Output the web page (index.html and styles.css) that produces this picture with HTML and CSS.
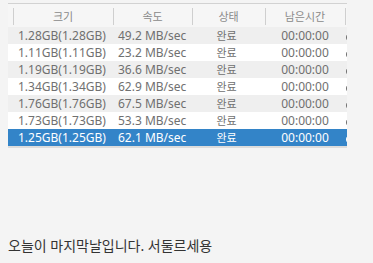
FILE: index.html
```html
<!DOCTYPE html>
<html lang="ko">
<head>
<meta charset="utf-8">
<link rel="stylesheet" href="styles.css">
</head>
<body>
<div class="list">
  <table class="grid">
    <colgroup>
      <col class="c0"><col class="c1"><col class="c2"><col class="c3"><col class="c4"><col class="c5">
    </colgroup>
    <thead>
      <tr><th></th><th>크기</th><th>속도</th><th>상태</th><th>남은시간</th><th></th></tr>
    </thead>
    <tbody>
      <tr class="odd"><td></td><td>1.28GB(1.28GB)</td><td>49.2 MB/sec</td><td class="st">완료</td><td class="tm">00:00:00</td><td class="ex"></td></tr>
      <tr><td></td><td>1.11GB(1.11GB)</td><td>23.2 MB/sec</td><td class="st">완료</td><td class="tm">00:00:00</td><td class="ex"></td></tr>
      <tr class="odd"><td></td><td>1.19GB(1.19GB)</td><td>36.6 MB/sec</td><td class="st">완료</td><td class="tm">00:00:00</td><td class="ex"></td></tr>
      <tr><td></td><td>1.34GB(1.34GB)</td><td>62.9 MB/sec</td><td class="st">완료</td><td class="tm">00:00:00</td><td class="ex"></td></tr>
      <tr class="odd"><td></td><td>1.76GB(1.76GB)</td><td>67.5 MB/sec</td><td class="st">완료</td><td class="tm">00:00:00</td><td class="ex"></td></tr>
      <tr><td></td><td>1.73GB(1.73GB)</td><td>53.3 MB/sec</td><td class="st">완료</td><td class="tm">00:00:00</td><td class="ex"></td></tr>
      <tr class="sel"><td></td><td>1.25GB(1.25GB)</td><td>62.1 MB/sec</td><td class="st">완료</td><td class="tm">00:00:00</td><td class="ex"></td></tr>
    </tbody>
  </table>
</div>
<p class="note">오늘이 마지막날입니다. 서둘르세용</p>
</body>
</html>
```
FILE: styles.css
```css
html, body {
  margin: 0;
  background: #f4f4f4;
}
body {
  padding: 3px 0 0 8px;
  font-family: "Noto Sans", "Noto Sans CJK KR", sans-serif;
}
.list {
  width: 339px;
  overflow: hidden;
  border-bottom: 2px solid #dcdcdc;
  background: #ffffff;
}
.grid {
  border-collapse: collapse;
  table-layout: fixed;
  width: 420px;
  font-size: 12px;
  color: #707070;
}
.c0 { width: 5px; }
.c1 { width: 100px; }
.c2 { width: 79px; }
.c3 { width: 73px; }
.c4 { width: 80px; }
.c5 { width: 83px; }
.grid th {
  height: 23px;
  padding: 0;
  border-top: 1px solid #d2d2d2;
  background: #f6f6f6;
  font-weight: normal;
  font-size: 11px;
  color: #8a8a8a;
  text-align: center;
}
.grid th + th {
  background-image: linear-gradient(#cfcfcf, #cfcfcf);
  background-size: 1px 17px;
  background-position: 0 4px;
  background-repeat: no-repeat;
}
.grid td {
  height: 17px;
  padding: 0 0 0 5px;
  white-space: nowrap;
  overflow: hidden;
  line-height: 17px;
}
.grid td:first-child { padding: 0; }
.grid td.st { text-align: center; padding: 0 4px 0 0; font-size: 11px; }
.grid td.tm { text-align: center; padding: 0; }
.grid td.ex { padding: 0 0 0 1px; }
.grid td.ex::before {
  content: "";
  display: inline-block;
  width: 4px;
  height: 7px;
  border-left: 1px solid currentColor;
  border-radius: 4px 0 0 4px;
  vertical-align: -1px;
}
.grid tr.odd td { background: #efefef; }
.grid tr.sel td { background: #3384c8; color: #ffffff; }
.note {
  margin: 88px 0 0;
  font-size: 14px;
  color: #333333;
  line-height: 20px;
}
```
